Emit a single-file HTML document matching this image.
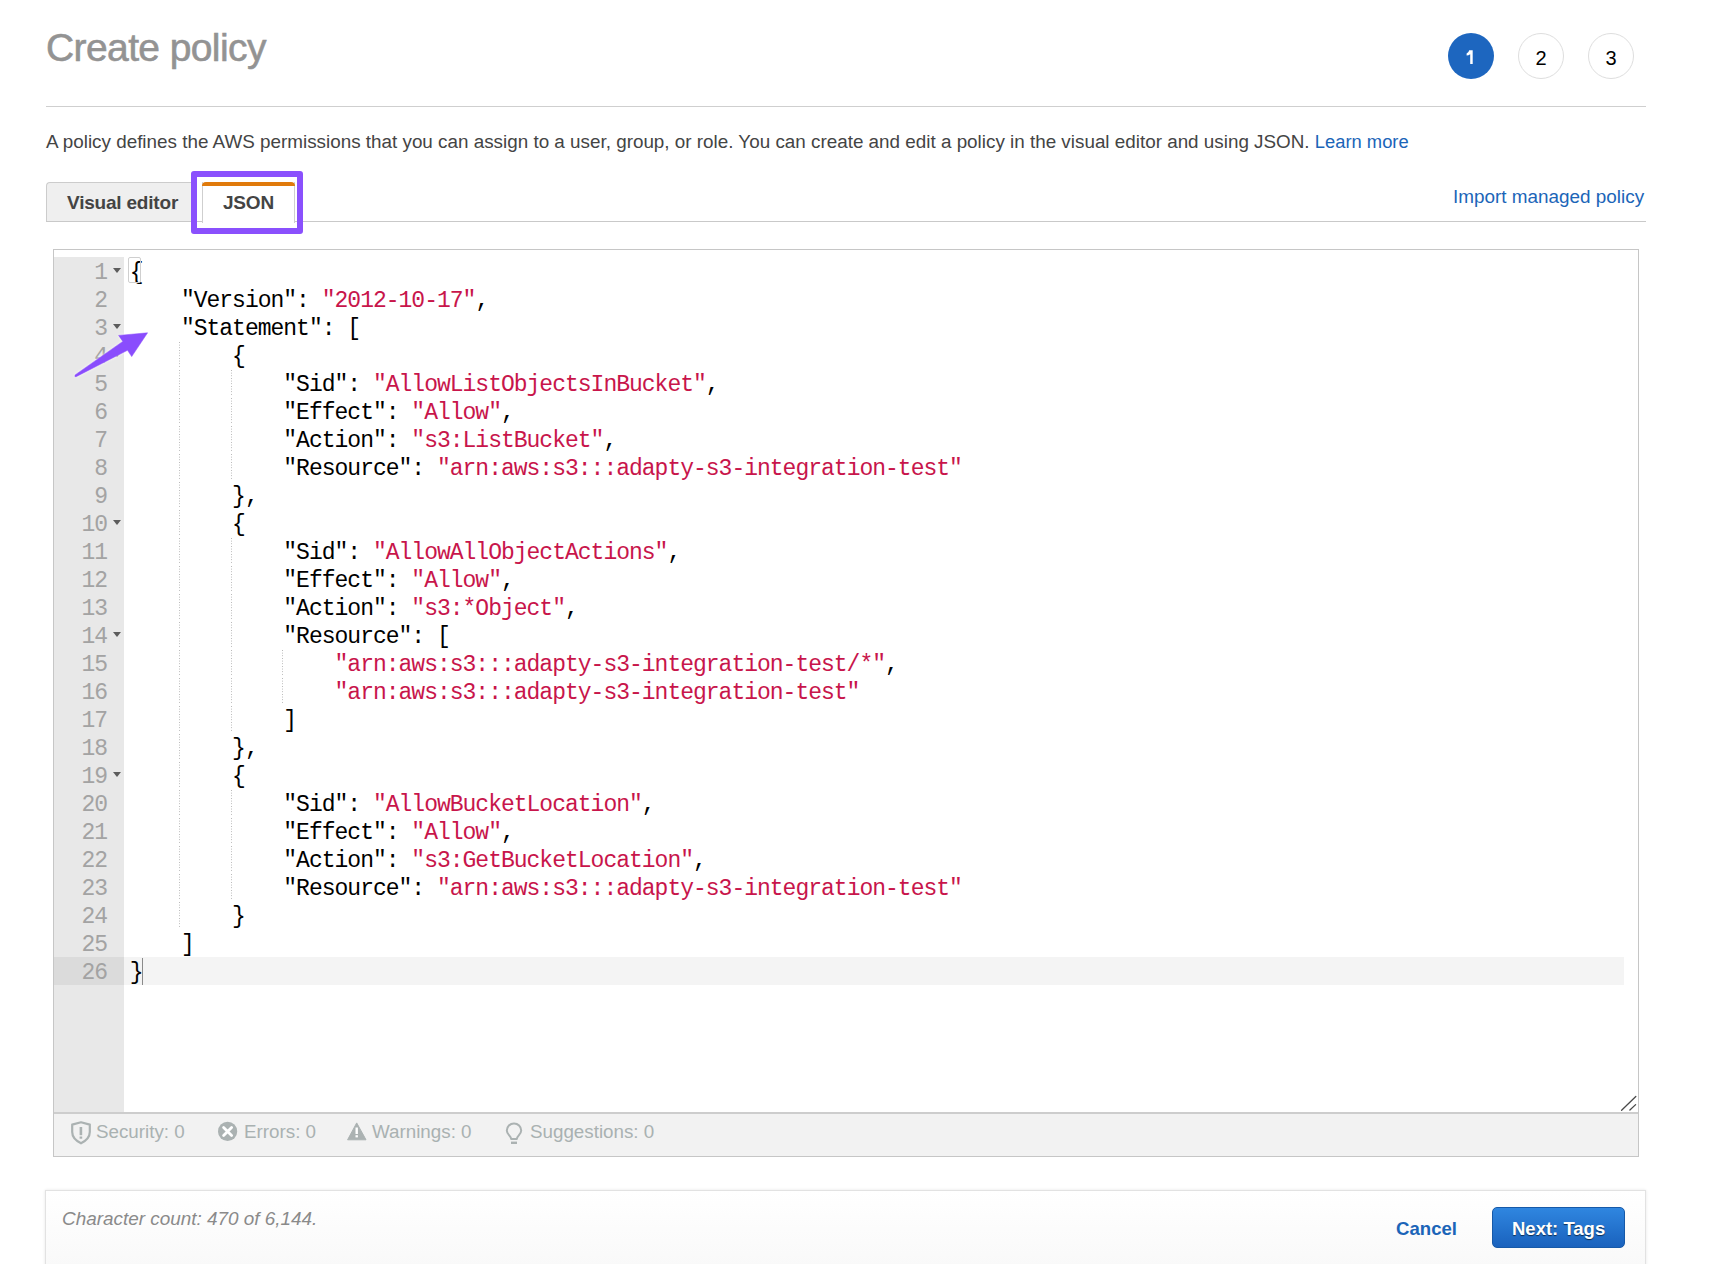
<!DOCTYPE html>
<html><head><meta charset="utf-8">
<style>
html,body{margin:0;padding:0;background:#fff;width:1712px;height:1264px;overflow:hidden;position:relative;font-family:"Liberation Sans",sans-serif;}
.a{position:absolute;white-space:pre;}
#title{left:46px;top:28px;font-size:39px;line-height:39px;letter-spacing:-0.6px;color:#939393;-webkit-text-stroke:0.6px #939393;}
.step{position:absolute;top:33px;width:46px;height:46px;border-radius:50%;box-sizing:border-box;font-size:20px;line-height:48px;text-align:center;color:#000;}
.s1{left:1448px;background:#1d66bf;color:#fff;}
.s2{left:1518px;border:1px solid #dedede;background:#fff;}
.s3{left:1588px;border:1px solid #dedede;background:#fff;}
#hr1{left:46px;top:106px;width:1600px;height:1px;background:#cfcfcf;}
#desc{left:46px;top:132px;font-size:18.85px;line-height:20px;color:#444;}
#desc a{color:#1b65b8;text-decoration:none;font-size:18.35px;}
#tabline{left:46px;top:221px;width:1600px;height:1px;background:#c9c9c9;}
#tab1{left:46px;top:182px;width:151px;height:39px;box-sizing:border-box;background:#efefef;border:1px solid #cccccc;border-bottom:none;border-right:none;border-radius:4px 0 0 0;}
#tab1t{left:67px;top:192.5px;letter-spacing:-0.2px;font-size:19px;line-height:20px;font-weight:bold;color:#444;}
#tab2{left:202px;top:182px;width:93px;height:41px;box-sizing:border-box;background:#fff;border-left:1px solid #cfcfcf;border-right:1px solid #cfcfcf;}
#tab2o{left:202px;top:182px;width:93px;height:4px;background:#e07a0b;border-radius:4px 4px 0 0;}
#tab2t{left:223px;top:192.5px;letter-spacing:-0.2px;font-size:19px;line-height:20px;font-weight:bold;color:#444;}
#import{left:1453px;top:187px;font-size:18.9px;line-height:20px;color:#1b65b8;}
#hl{left:191px;top:171px;width:112px;height:63px;box-sizing:border-box;border:6px solid #8a50fd;border-radius:3px;}
/* editor */
#ed{left:53px;top:249px;width:1586px;height:908px;box-sizing:border-box;border:1px solid #c6c6c6;background:#fff;}
#gut{left:54px;top:257px;width:70px;height:855px;background:#e8e8e8;}
#gutact{left:54px;top:957px;width:70px;height:28px;background:#dbdbdb;}
#lineact{left:124px;top:957px;width:1500px;height:28px;background:#f4f4f4;}
.ln{position:absolute;left:54px;width:53px;text-align:right;font-family:"Liberation Mono",monospace;font-size:23px;letter-spacing:-1px;line-height:28px;color:#a3a3a3;white-space:pre;}
.fw{position:absolute;left:112.6px;width:0;height:0;border-left:4px solid transparent;border-right:4px solid transparent;border-top:5px solid #5c5c5c;}
.cl{position:absolute;left:129.7px;font-family:"Liberation Mono",monospace;font-size:23px;letter-spacing:-1px;line-height:28px;color:#000;white-space:pre;}
.s{color:#c8154b;}
.ig{position:absolute;width:1px;background-image:linear-gradient(#b4b4b4 40%,transparent 40%);background-size:1px 2.67px;}
#brk{left:128px;top:257px;width:13px;height:26px;box-sizing:border-box;border:1px solid #cfcfcf;border-radius:2px;}
#cur{left:142px;top:958px;width:1px;height:27px;background:#8a8a8a;}
#sep{left:54px;top:1112px;width:1584px;height:2px;background:#cdcdcd;}
#status{left:54px;top:1114px;width:1584px;height:42px;background:#f2f2f2;}
.st{position:absolute;top:1122px;font-size:18.8px;line-height:20px;color:#a9b1b1;}
/* footer */
#foot{left:45px;top:1190px;width:1601px;height:90px;box-sizing:border-box;border:1px solid #e2e2e2;background:linear-gradient(#fff,#f8f8f8);box-shadow:0 0 3px rgba(0,0,0,0.10);}
#cc{left:62px;top:1209px;font-size:18.9px;line-height:20px;font-style:italic;color:#8a8a8a;}
#cancel{left:1396px;top:1219px;font-size:18.6px;line-height:20px;font-weight:bold;color:#1b65b8;}
#next{left:1492px;top:1207px;width:133px;height:41px;box-sizing:border-box;border:1px solid #1659a8;border-radius:5px;background:linear-gradient(#2f86e0,#1a62bd);}
#nextt{left:1512px;top:1219px;font-size:18.5px;line-height:20px;font-weight:bold;color:#fff;text-shadow:0 1px 1px rgba(0,0,0,0.6);}
</style></head><body>
<div class="a" id="title">Create policy</div>
<div class="step s1"><svg style="position:absolute;left:0;top:0" width="46" height="46" viewBox="0 0 46 46"><path d="M21.2 17.2 L24.7 17.2 L24.7 31 L22.2 31 L22.2 21.2 Q20.6 22.4 18.6 22.6 L18.6 20.6 Q20.6 19.8 21.2 17.2 Z" fill="#fff"/></svg></div><div class="step s2">2</div><div class="step s3">3</div>
<div class="a" id="hr1"></div>
<div class="a" id="desc">A policy defines the AWS permissions that you can assign to a user, group, or role. You can create and edit a policy in the visual editor and using JSON. <a>Learn more</a></div>
<div class="a" id="tabline"></div>
<div class="a" id="tab1"></div>
<div class="a" id="tab1t">Visual editor</div>
<div class="a" id="tab2"></div>
<div class="a" id="tab2o"></div>
<div class="a" id="tab2t">JSON</div>
<div class="a" id="import">Import managed policy</div>
<div class="a" id="hl"></div>

<div class="a" id="ed"></div>
<div class="a" id="gut"></div>
<div class="a" id="gutact"></div>
<div class="a" id="lineact"></div>
<!--GUTTER-->
<div class="ln" style="top:259px">1</div>
<div class="fw" style="top:268px"></div>
<div class="ln" style="top:287px">2</div>
<div class="ln" style="top:315px">3</div>
<div class="fw" style="top:324px"></div>
<div class="ln" style="top:343px">4</div>
<div class="fw" style="top:352px"></div>
<div class="ln" style="top:371px">5</div>
<div class="ln" style="top:399px">6</div>
<div class="ln" style="top:427px">7</div>
<div class="ln" style="top:455px">8</div>
<div class="ln" style="top:483px">9</div>
<div class="ln" style="top:511px">10</div>
<div class="fw" style="top:520px"></div>
<div class="ln" style="top:539px">11</div>
<div class="ln" style="top:567px">12</div>
<div class="ln" style="top:595px">13</div>
<div class="ln" style="top:623px">14</div>
<div class="fw" style="top:632px"></div>
<div class="ln" style="top:651px">15</div>
<div class="ln" style="top:679px">16</div>
<div class="ln" style="top:707px">17</div>
<div class="ln" style="top:735px">18</div>
<div class="ln" style="top:763px">19</div>
<div class="fw" style="top:772px"></div>
<div class="ln" style="top:791px">20</div>
<div class="ln" style="top:819px">21</div>
<div class="ln" style="top:847px">22</div>
<div class="ln" style="top:875px">23</div>
<div class="ln" style="top:903px">24</div>
<div class="ln" style="top:931px">25</div>
<div class="ln" style="top:959px">26</div>
<!--/GUTTER-->
<!--CODE-->
<div class="ig" style="left:179px;top:342px;height:25px"></div>
<div class="ig" style="left:179px;top:370px;height:25px"></div>
<div class="ig" style="left:231px;top:370px;height:25px"></div>
<div class="ig" style="left:179px;top:398px;height:25px"></div>
<div class="ig" style="left:231px;top:398px;height:25px"></div>
<div class="ig" style="left:179px;top:426px;height:25px"></div>
<div class="ig" style="left:231px;top:426px;height:25px"></div>
<div class="ig" style="left:179px;top:454px;height:25px"></div>
<div class="ig" style="left:231px;top:454px;height:25px"></div>
<div class="ig" style="left:179px;top:482px;height:25px"></div>
<div class="ig" style="left:179px;top:510px;height:25px"></div>
<div class="ig" style="left:179px;top:538px;height:25px"></div>
<div class="ig" style="left:231px;top:538px;height:25px"></div>
<div class="ig" style="left:179px;top:566px;height:25px"></div>
<div class="ig" style="left:231px;top:566px;height:25px"></div>
<div class="ig" style="left:179px;top:594px;height:25px"></div>
<div class="ig" style="left:231px;top:594px;height:25px"></div>
<div class="ig" style="left:179px;top:622px;height:25px"></div>
<div class="ig" style="left:231px;top:622px;height:25px"></div>
<div class="ig" style="left:179px;top:650px;height:25px"></div>
<div class="ig" style="left:231px;top:650px;height:25px"></div>
<div class="ig" style="left:282px;top:650px;height:25px"></div>
<div class="ig" style="left:179px;top:678px;height:25px"></div>
<div class="ig" style="left:231px;top:678px;height:25px"></div>
<div class="ig" style="left:282px;top:678px;height:25px"></div>
<div class="ig" style="left:179px;top:706px;height:25px"></div>
<div class="ig" style="left:231px;top:706px;height:25px"></div>
<div class="ig" style="left:179px;top:734px;height:25px"></div>
<div class="ig" style="left:179px;top:762px;height:25px"></div>
<div class="ig" style="left:179px;top:790px;height:25px"></div>
<div class="ig" style="left:231px;top:790px;height:25px"></div>
<div class="ig" style="left:179px;top:818px;height:25px"></div>
<div class="ig" style="left:231px;top:818px;height:25px"></div>
<div class="ig" style="left:179px;top:846px;height:25px"></div>
<div class="ig" style="left:231px;top:846px;height:25px"></div>
<div class="ig" style="left:179px;top:874px;height:25px"></div>
<div class="ig" style="left:231px;top:874px;height:25px"></div>
<div class="ig" style="left:179px;top:902px;height:25px"></div>
<div class="cl" style="top:259px">{</div>
<div class="cl" style="top:287px">    &quot;Version&quot;: <span class="s">&quot;2012-10-17&quot;</span>,</div>
<div class="cl" style="top:315px">    &quot;Statement&quot;: [</div>
<div class="cl" style="top:343px">        {</div>
<div class="cl" style="top:371px">            &quot;Sid&quot;: <span class="s">&quot;AllowListObjectsInBucket&quot;</span>,</div>
<div class="cl" style="top:399px">            &quot;Effect&quot;: <span class="s">&quot;Allow&quot;</span>,</div>
<div class="cl" style="top:427px">            &quot;Action&quot;: <span class="s">&quot;s3:ListBucket&quot;</span>,</div>
<div class="cl" style="top:455px">            &quot;Resource&quot;: <span class="s">&quot;arn:aws:s3:::adapty-s3-integration-test&quot;</span></div>
<div class="cl" style="top:483px">        },</div>
<div class="cl" style="top:511px">        {</div>
<div class="cl" style="top:539px">            &quot;Sid&quot;: <span class="s">&quot;AllowAllObjectActions&quot;</span>,</div>
<div class="cl" style="top:567px">            &quot;Effect&quot;: <span class="s">&quot;Allow&quot;</span>,</div>
<div class="cl" style="top:595px">            &quot;Action&quot;: <span class="s">&quot;s3:*Object&quot;</span>,</div>
<div class="cl" style="top:623px">            &quot;Resource&quot;: [</div>
<div class="cl" style="top:651px">                <span class="s">&quot;arn:aws:s3:::adapty-s3-integration-test/*&quot;</span>,</div>
<div class="cl" style="top:679px">                <span class="s">&quot;arn:aws:s3:::adapty-s3-integration-test&quot;</span></div>
<div class="cl" style="top:707px">            ]</div>
<div class="cl" style="top:735px">        },</div>
<div class="cl" style="top:763px">        {</div>
<div class="cl" style="top:791px">            &quot;Sid&quot;: <span class="s">&quot;AllowBucketLocation&quot;</span>,</div>
<div class="cl" style="top:819px">            &quot;Effect&quot;: <span class="s">&quot;Allow&quot;</span>,</div>
<div class="cl" style="top:847px">            &quot;Action&quot;: <span class="s">&quot;s3:GetBucketLocation&quot;</span>,</div>
<div class="cl" style="top:875px">            &quot;Resource&quot;: <span class="s">&quot;arn:aws:s3:::adapty-s3-integration-test&quot;</span></div>
<div class="cl" style="top:903px">        }</div>
<div class="cl" style="top:931px">    ]</div>
<div class="cl" style="top:959px">}</div>
<!--/CODE-->
<div class="a" id="brk"></div>
<div class="a" id="cur"></div>
<svg class="a" style="left:1618px;top:1092px" width="20" height="20" viewBox="0 0 20 20"><path d="M3.6 18.2 L17.8 4.5 M11.9 18.0 L17.6 12.6" stroke="#4a4a4a" stroke-width="1.3" stroke-linecap="round"/></svg>
<div class="a" id="sep"></div>
<div class="a" id="status"></div>
<!--STATUS-->
<svg class="a" style="left:70px;top:1121px" width="22" height="24" viewBox="0 0 22 24"><path d="M2.2 3.6 L11 1.3 L19.8 3.6 L19.8 11 C19.8 16.5 15.5 20 11 22.3 C6.5 20 2.2 16.5 2.2 11 Z" fill="none" stroke="#abb2b2" stroke-width="2.2" stroke-linejoin="round"/><rect x="9.6" y="6" width="2.6" height="8.2" fill="#abb2b2"/><rect x="9.6" y="15.5" width="2.6" height="2.2" fill="#abb2b2"/></svg>
<div class="st" style="left:96px">Security: 0</div>
<svg class="a" style="left:217px;top:1121px" width="22" height="22" viewBox="0 0 22 22"><circle cx="10.6" cy="10.4" r="9.6" fill="#abb2b2"/><path d="M6.6 6.4 L14.6 14.4 M14.6 6.4 L6.6 14.4" stroke="#fff" stroke-width="2.8" stroke-linecap="round"/></svg>
<div class="st" style="left:244px">Errors: 0</div>
<svg class="a" style="left:346px;top:1121px" width="22" height="22" viewBox="0 0 22 22"><path d="M10.7 1.9 L20 18.8 L1.6 18.8 Z" fill="#abb2b2" stroke="#abb2b2" stroke-width="1" stroke-linejoin="round"/><rect x="9.5" y="6.5" width="2.4" height="6.5" fill="#fff"/><rect x="9.5" y="14.2" width="2.4" height="2.2" fill="#fff"/></svg>
<div class="st" style="left:372px">Warnings: 0</div>
<svg class="a" style="left:504px;top:1122px" width="22" height="24" viewBox="0 0 22 24"><path d="M7.2 17 C7.2 14 2.8 12.5 2.8 8.6 A7.2 7.2 0 0 1 17.2 8.6 C17.2 12.5 12.8 14 12.8 17 Z" fill="none" stroke="#abb2b2" stroke-width="2" stroke-linejoin="round"/><rect x="7" y="19.6" width="6" height="2.4" fill="#abb2b2"/></svg>
<div class="st" style="left:530px">Suggestions: 0</div>
<!--/STATUS-->

<div class="a" id="foot"></div>
<div class="a" id="cc">Character count: 470 of 6,144.</div>
<div class="a" id="cancel">Cancel</div>
<div class="a" id="next"></div>
<div class="a" id="nextt">Next: Tags</div>
<!--ARROW-->
<svg class="a" style="left:0;top:0;filter:drop-shadow(0 0 1.5px rgba(255,255,255,0.9))" width="200" height="420" viewBox="0 0 200 420"><path d="M75.1 374.9 L122.8 341.4 L118.6 335.4 L147.6 332.8 L131.7 356.6 L127.5 350.3 L76.1 376.7 Q74.3 377.3 75.1 374.9 Z" fill="#8a4dfd" stroke="#8a4dfd" stroke-width="0.5" stroke-linejoin="round"/></svg>
<!--/ARROW-->
</body></html>
